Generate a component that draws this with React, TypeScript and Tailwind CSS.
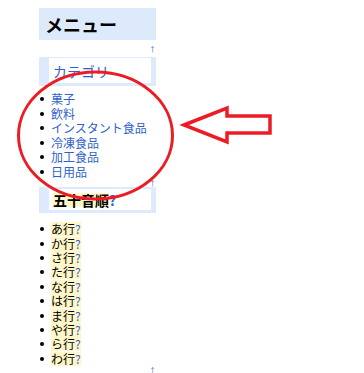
const categories = ['菓子', '飲料', 'インスタント食品', '冷凍食品', '加工食品', '日用品'];
const rows = ['あ行', 'か行', 'さ行', 'た行', 'な行', 'は行', 'ま行', 'や行', 'ら行', 'わ行'];

function TopLink({ h }: { h: string }) {
  return <div className={`${h} flex justify-end items-start pt-[1px] text-[7px] leading-none text-[#3366cc]`}>↑</div>;
}

function Dot() {
  return <span className="shrink-0 w-[4px] h-[4px] rounded-full bg-black ml-[1px] mr-[7px]" />;
}

export default function App() {
  return (
    <div className="relative w-[364px] h-[373px] bg-white overflow-hidden font-['Noto_Sans_CJK_JP',sans-serif]">
      <div className="ml-[39px] w-[117px] pt-[8px]">
        <h1 className="h-[32px] bg-[#dceafb] pl-[6px] flex items-center text-[18px] font-bold text-black leading-none">メニュー</h1>
        <div className="h-[17px] flex justify-end items-start pt-[6px] text-[7px] leading-none text-[#3366cc]">↑</div>

        <div className="bg-[#dceafb] pl-[10px] pr-[5px] pt-[1px] pb-[3px]">
          <h2 className="h-[25px] bg-white pl-[4px] flex items-center text-[14px] text-[#2f62c8] leading-none">カテゴリ</h2>
        </div>
        <ul className="pt-[6px] text-[12px] text-[#2f62c8]">
          {categories.map(c => (
            <li key={c} className="flex items-center h-[14.5px] leading-none">
              <Dot />
              {c}
            </li>
          ))}
        </ul>
        <TopLink h="h-[8px]" />

        <div className="bg-[#dceafb] pl-[10px] pr-[5px] pt-[2px] pb-[3px]">
          <h2 className="h-[21px] bg-white pl-[4px] flex items-center text-[14px] font-bold text-black leading-none">
            <span className="bg-[#fff7c8]">五十音順</span>
            <span className="text-[#2f62c8]">?</span>
          </h2>
        </div>
        <ul className="pt-[9px] text-[12px] text-black">
          {rows.map(r => (
            <li key={r} className="flex items-center h-[14.4px] leading-none">
              <Dot />
              <span className="bg-[#fff7c8] py-[1px]">{r}<span className="text-[#2f62c8]">?</span></span>
            </li>
          ))}
        </ul>
        <TopLink h="h-[8px]" />
      </div>

      {/* red markup drawn over the page */}
      <svg className="absolute left-0 top-0 pointer-events-none" width="364" height="373" viewBox="0 0 364 373">
        <ellipse cx="95.5" cy="135.5" rx="77" ry="63.5" fill="none" stroke="#ed1c24" strokeWidth="3" />
        <polygon
          points="184,125 227,108 227,116 270,116 270,133 227,133 227,142"
          fill="none"
          stroke="#ed1c24"
          strokeWidth="3.5"
          strokeLinejoin="miter"
        />
      </svg>
    </div>
  );
}
